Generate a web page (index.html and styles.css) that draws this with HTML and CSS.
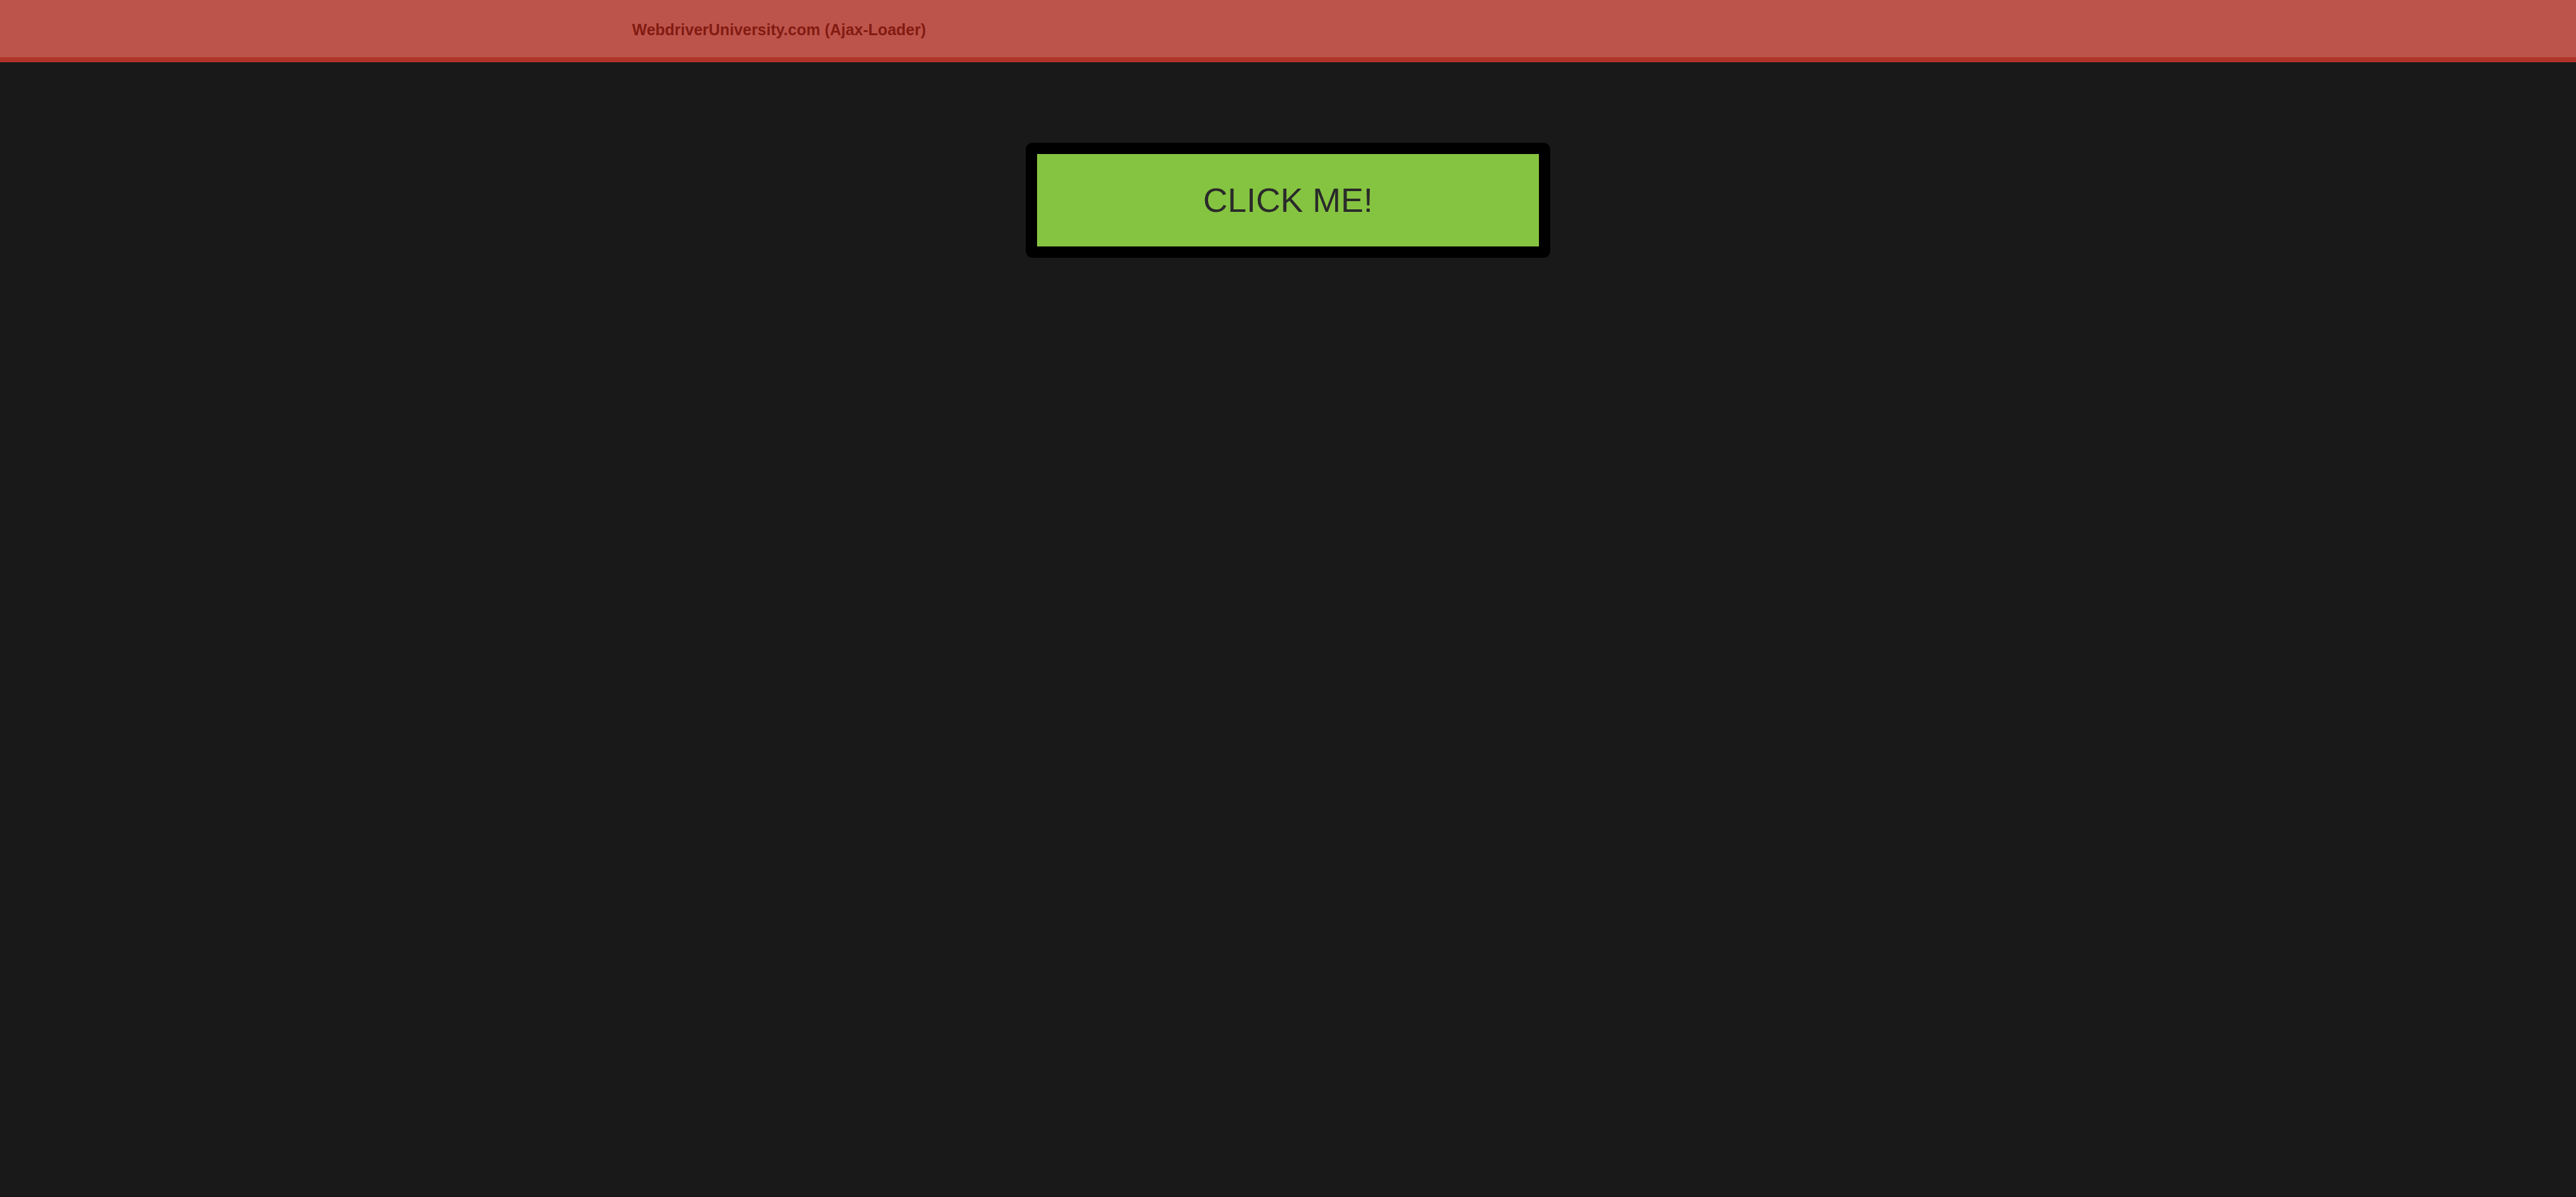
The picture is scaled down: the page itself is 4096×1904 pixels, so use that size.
FILE: index.html
```html
<!DOCTYPE html>
<html lang="en">
<head>
<meta charset="utf-8">
<title>WebDriver | Ajax-Loader</title>
<link rel="stylesheet" href="styles.css">
</head>
<body>
<nav class="navbar">
  <div class="container">
    <a class="brand" href="#">WebdriverUniversity.com (Ajax-Loader)</a>
  </div>
</nav>
<main class="content">
  <button class="click-button" type="button">CLICK ME!</button>
</main>
</body>
</html>
```

FILE: styles.css
```css
* {
  box-sizing: border-box;
}

body {
  margin: 0;
  min-height: 100vh;
  background: #191919;
  border-bottom: 1px solid #181016;
  font-family: "Liberation Sans", Arial, sans-serif;
}

.navbar {
  background: #bd544b;
  border-bottom: 8px solid #b03429;
}

.container {
  max-width: 2140px;
  margin: 0 auto;
  padding: 32px 27px 29px;
}

.brand {
  display: block;
  width: fit-content;
  color: #821b12;
  font-size: 25px;
  font-weight: 700;
  line-height: 30px;
  text-decoration: none;
}

.content {
  display: flex;
  justify-content: center;
  padding-top: 128px;
}

.click-button {
  width: 834px;
  max-width: 100%;
  padding: 42px 0;
  background: #85c440;
  border: 18px solid #000;
  border-radius: 11px;
  color: #2a2a2a;
  font-family: inherit;
  font-size: 54px;
  line-height: 63px;
  cursor: pointer;
}
```
